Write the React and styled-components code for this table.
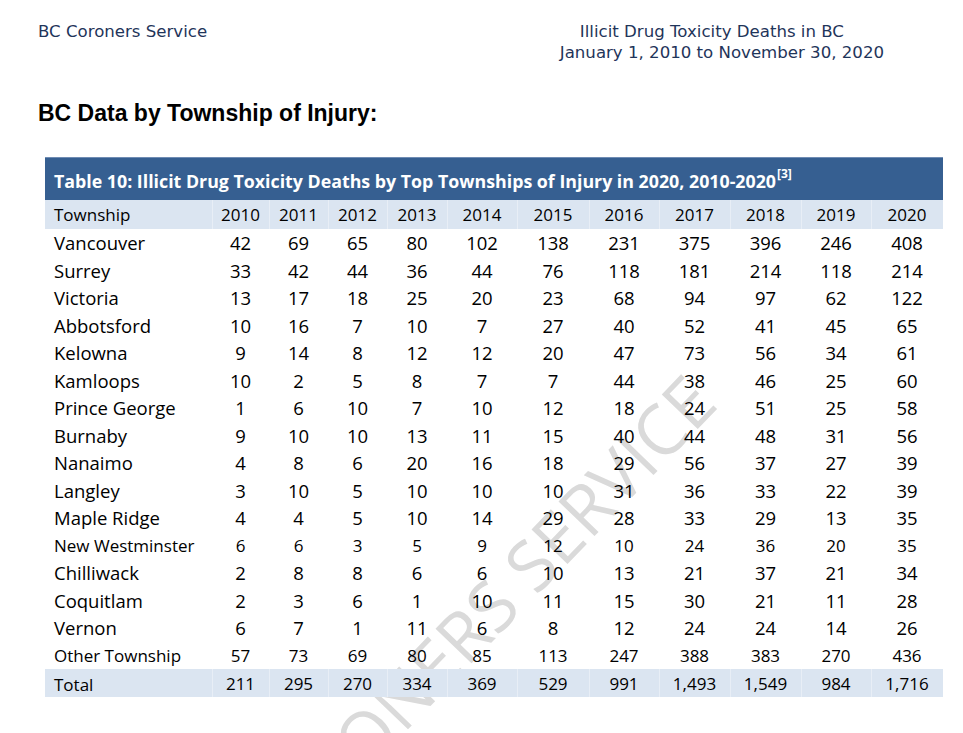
import React from 'react';
import styled, { createGlobalStyle } from 'styled-components';

const GlobalStyle = createGlobalStyle`
  html, body {
    margin: 0;
    padding: 0;
    background: #ffffff;
  }
  body {
    font-family: "Open Sans", "Noto Sans", sans-serif;
    color: #000;
  }
`;

const COLUMNS = '167px 57px 59px 59px 60px 70px 72px 70px 71px 71px 70px 72px';

const years = [2010, 2011, 2012, 2013, 2014, 2015, 2016, 2017, 2018, 2019, 2020];

const rows = [
  { name: 'Vancouver', values: ['42', '69', '65', '80', '102', '138', '231', '375', '396', '246', '408'] },
  { name: 'Surrey', values: ['33', '42', '44', '36', '44', '76', '118', '181', '214', '118', '214'] },
  { name: 'Victoria', values: ['13', '17', '18', '25', '20', '23', '68', '94', '97', '62', '122'] },
  { name: 'Abbotsford', values: ['10', '16', '7', '10', '7', '27', '40', '52', '41', '45', '65'] },
  { name: 'Kelowna', values: ['9', '14', '8', '12', '12', '20', '47', '73', '56', '34', '61'] },
  { name: 'Kamloops', values: ['10', '2', '5', '8', '7', '7', '44', '38', '46', '25', '60'] },
  { name: 'Prince George', values: ['1', '6', '10', '7', '10', '12', '18', '24', '51', '25', '58'] },
  { name: 'Burnaby', values: ['9', '10', '10', '13', '11', '15', '40', '44', '48', '31', '56'] },
  { name: 'Nanaimo', values: ['4', '8', '6', '20', '16', '18', '29', '56', '37', '27', '39'] },
  { name: 'Langley', values: ['3', '10', '5', '10', '10', '10', '31', '36', '33', '22', '39'] },
  { name: 'Maple Ridge', values: ['4', '4', '5', '10', '14', '29', '28', '33', '29', '13', '35'] },
  { name: 'New Westminster', small: true, values: ['6', '6', '3', '5', '9', '12', '10', '24', '36', '20', '35'] },
  { name: 'Chilliwack', values: ['2', '8', '8', '6', '6', '10', '13', '21', '37', '21', '34'] },
  { name: 'Coquitlam', values: ['2', '3', '6', '1', '10', '11', '15', '30', '21', '11', '28'] },
  { name: 'Vernon', values: ['6', '7', '1', '11', '6', '8', '12', '24', '24', '14', '26'] },
  { name: 'Other Township', small: true, values: ['57', '73', '69', '80', '85', '113', '247', '388', '383', '270', '436'] },
];

const totals = ['211', '295', '270', '334', '369', '529', '991', '1,493', '1,549', '984', '1,716'];

const Page = styled.div`
  position: relative;
  box-sizing: border-box;
  height: 733px;
  overflow: hidden;
  padding: 21px 0 0 38px;
`;

const Watermark = styled.div`
  position: absolute;
  left: 474px;
  top: 622px;
  transform: translate(-50%, -50%) rotate(-46deg);
  font-family: "Open Sans", sans-serif;
  font-size: 70px;
  line-height: 1;
  white-space: nowrap;
  color: #dadada;
  z-index: 0;
  pointer-events: none;
`;

const TopBar = styled.header`
  position: relative;
  z-index: 1;
  display: flex;
  justify-content: space-between;
  width: 846px;
  font-family: "DejaVu Sans", Verdana, sans-serif;
  font-size: 16.6px;
  line-height: 21px;
  color: #1f355a;
`;

const DocTitle = styled.div`
  display: flex;
  flex-direction: column;
  align-items: center;
`;

const TitleLine = styled.span`
  padding-right: ${({ $shift }) => $shift || 0}px;
`;

const SectionHeading = styled.h1`
  position: relative;
  z-index: 1;
  margin: 37px 0 0;
  font-family: "Liberation Sans", Arial, sans-serif;
  font-weight: bold;
  font-size: 23px;
  line-height: 26px;
  color: #000;
`;

const Table = styled.section`
  position: relative;
  z-index: 1;
  width: 898px;
  margin: 31px 0 0 7px;
`;

const Caption = styled.div`
  box-sizing: border-box;
  height: 43px;
  display: flex;
  align-items: center;
  padding: 4px 0 0 9px;
  background: #365f91;
  border-top: 1px solid #6f8cb3;
  color: #ffffff;
  font-weight: bold;
  font-size: 17.8px;
  white-space: nowrap;

  sup {
    font-size: 12px;
    line-height: 0;
    position: relative;
    top: -7px;
    margin-left: 1px;
  }
`;

const Row = styled.div`
  display: grid;
  grid-template-columns: ${COLUMNS};
  height: ${({ $height }) => $height}px;
  align-items: center;
  background: ${({ $shaded }) => ($shaded ? '#dbe5f1' : 'transparent')};
  font-size: ${({ $size }) => $size}px;
`;

const Cell = styled.div`
  height: 100%;
  display: flex;
  align-items: center;
  justify-content: ${({ $first }) => ($first ? 'flex-start' : 'center')};
  padding-left: ${({ $first }) => ($first ? '9px' : '0')};
  padding-top: ${({ $dy }) => $dy || 0}px;
  box-sizing: border-box;
  white-space: nowrap;
  box-shadow: ${({ $shaded, $first }) => ($shaded && !$first ? 'inset 1px 0 0 #e8eef6' : 'none')};
`;

const App = () => (
  <Page>
    <GlobalStyle />
    <Watermark>CORONERS SERVICE</Watermark>
    <TopBar>
      <span>BC Coroners Service</span>
      <DocTitle>
        <TitleLine $shift={20}>Illicit Drug Toxicity Deaths in BC</TitleLine>
        <TitleLine>January 1, 2010 to November 30, 2020</TitleLine>
      </DocTitle>
    </TopBar>
    <SectionHeading>BC Data by Township of Injury:</SectionHeading>
    <Table>
      <Caption>
        Table 10: Illicit Drug Toxicity Deaths by Top Townships of Injury in 2020, 2010-2020<sup>[3]</sup>
      </Caption>
      <Row $shaded $height={29} $size={17}>
        <Cell $first $shaded>Township</Cell>
        {years.map((y) => (
          <Cell key={y} $shaded>{y}</Cell>
        ))}
      </Row>
      {rows.map((r) => (
        <Row key={r.name} $height={27.5} $size={r.small ? 17 : 18.5}>
          <Cell $first>{r.name}</Cell>
          {r.values.map((v, i) => (
            <Cell key={i}>{v}</Cell>
          ))}
        </Row>
      ))}
      <Row $shaded $height={28} $size={17}>
        <Cell $first $shaded $dy={3}>Total</Cell>
        {totals.map((v, i) => (
          <Cell key={i} $shaded>{v}</Cell>
        ))}
      </Row>
    </Table>
  </Page>
);

export default App;
